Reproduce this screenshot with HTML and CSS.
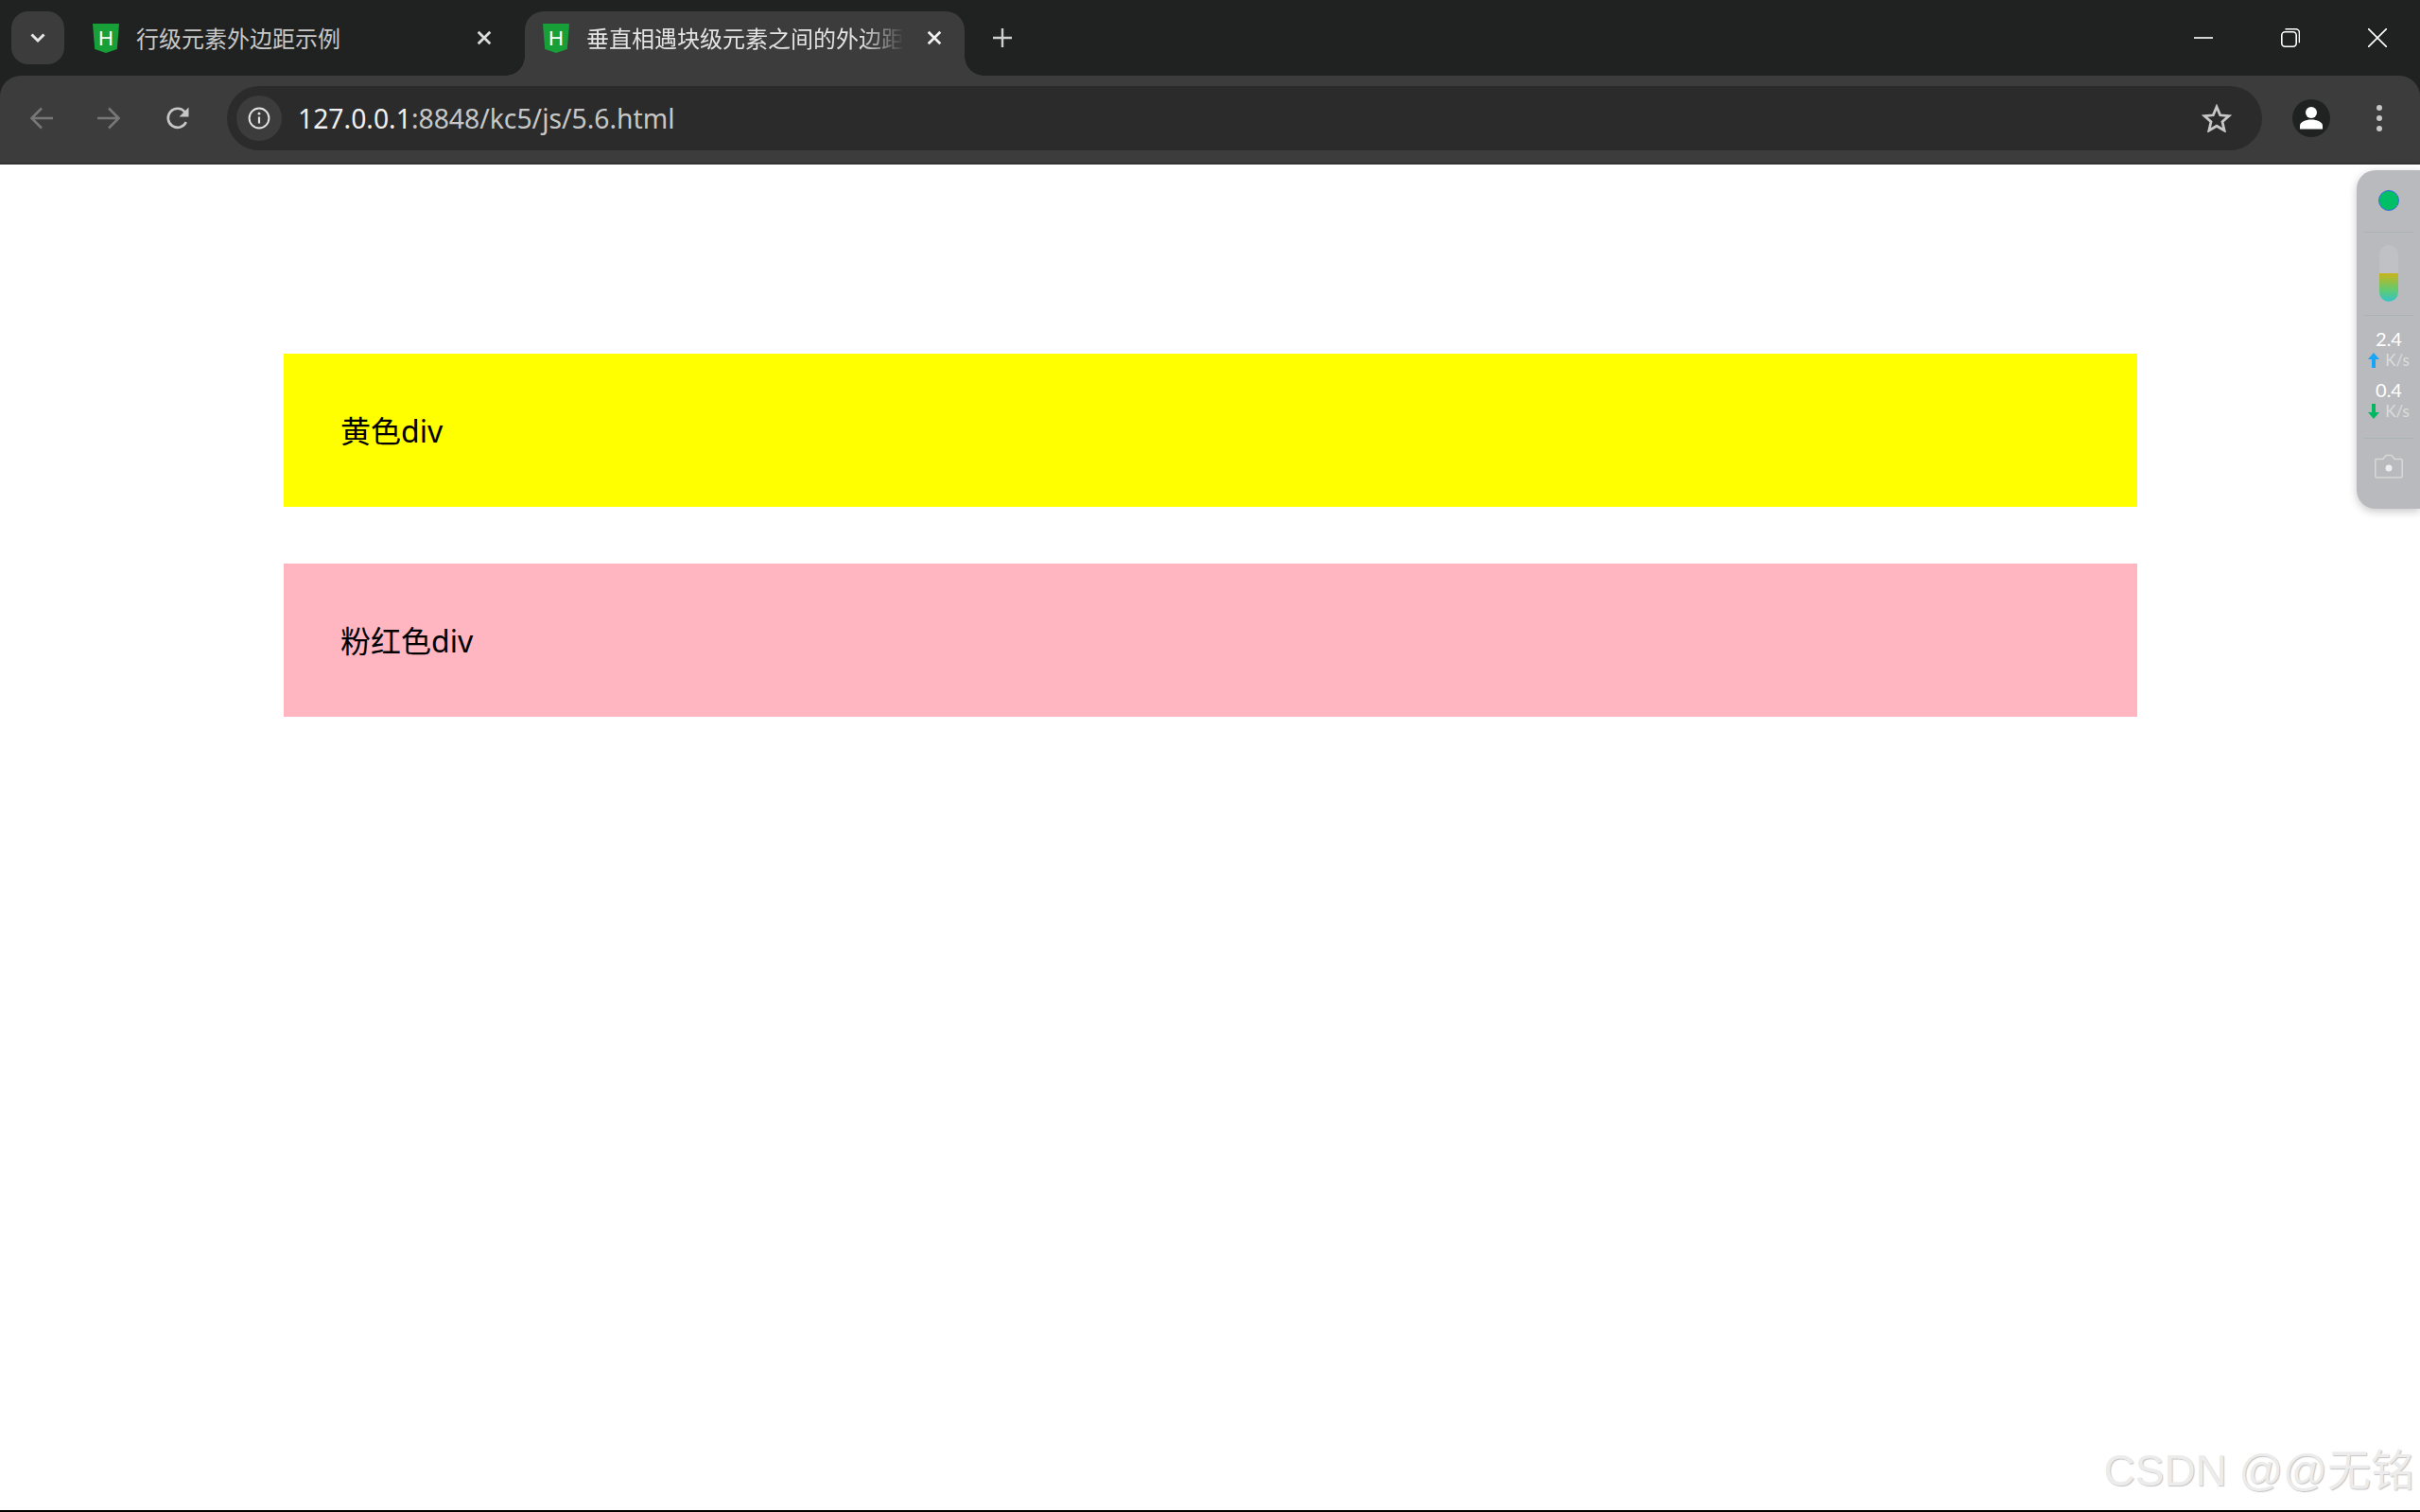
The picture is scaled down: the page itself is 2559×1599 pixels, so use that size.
FILE: index.html
```html
<!DOCTYPE html>
<html lang="zh-CN">
<head>
<meta charset="utf-8">
<title>垂直相遇块级元素之间的外边距</title>
<link rel="stylesheet" href="styles.css">
</head>
<body>
<header class="browser">
  <div class="strip">
    <button class="tab-search" aria-label="tabs">
      <svg width="18" height="12" viewBox="0 0 18 12"><path d="M2.500 2.500 9 9l6.500-6.500" fill="none" stroke="#e6e6e6" stroke-width="3"/></svg>
    </button>
    <div class="tab tab-idle">
      <svg class="favicon" width="28" height="31" viewBox="0 0 28 31"><path d="M0 0h28l-2.200 27L14 31 2.200 27z" fill="#18a038"/><text x="14" y="23" text-anchor="middle" class="fav-h">H</text></svg>
      <span class="tab-title">行级元素外边距示例</span>
      <svg class="tab-close" width="16" height="16" viewBox="0 0 14 14"><path d="M1.500 1.500l11 11M12.500 1.500l-11 11" stroke="#dcdcdc" stroke-width="2.400"/></svg>
    </div>
    <div class="tab tab-active">
      <svg class="favicon" width="28" height="31" viewBox="0 0 28 31"><path d="M0 0h28l-2.200 27L14 31 2.200 27z" fill="#18a038"/><text x="14" y="23" text-anchor="middle" class="fav-h">H</text></svg>
      <span class="tab-title">垂直相遇块级元素之间的外边距</span>
      <svg class="tab-close" width="16" height="16" viewBox="0 0 14 14"><path d="M1.500 1.500l11 11M12.500 1.500l-11 11" stroke="#f0f0f0" stroke-width="2.400"/></svg>
    </div>
    <svg class="new-tab" width="20" height="20" viewBox="0 0 20 20"><path d="M10 0v20M0 10h20" stroke="#d0d0d0" stroke-width="2.400"/></svg>
    <div class="window-controls">
      <svg width="20" height="20" viewBox="0 0 20 20"><path d="M0 10h20" stroke="#fff" stroke-width="1.600"/></svg>
      <svg width="20" height="20" viewBox="0 0 20 20"><rect x="0.800" y="3.800" width="15.400" height="15.400" rx="3.500" fill="none" stroke="#fff" stroke-width="1.600"/><path d="M4.500 0.800h11a4 4 0 0 1 4 4v10.500" fill="none" stroke="#fff" stroke-width="1.600"/></svg>
      <svg width="20" height="20" viewBox="0 0 20 20"><path d="M0 0l20 20M20 0L0 20" stroke="#fff" stroke-width="1.600"/></svg>
    </div>
  </div>
  <div class="toolbar">
    <svg class="nav-icon nav-back" width="26" height="26" viewBox="0 0 26 26"><path d="M25 13H3M13 2.500 2.500 13 13 23.500" fill="none" stroke="#777" stroke-width="2.600"/></svg>
    <svg class="nav-icon nav-forward" width="26" height="26" viewBox="0 0 26 26"><path d="M1 13h22M13 2.500 23.500 13 13 23.500" fill="none" stroke="#777" stroke-width="2.600"/></svg>
    <svg class="nav-icon nav-reload" width="26" height="26" viewBox="0 0 26 26"><path d="M21.800 17A10 10 0 1 1 20.500 6.500L23 9.500" fill="none" stroke="#c7c7c7" stroke-width="2.600"/><path d="M24.500 1.500v10h-10z" fill="#c7c7c7"/></svg>
    <div class="omnibox">
      <span class="info-chip">
        <svg width="24" height="24" viewBox="0 0 24 24"><circle cx="12" cy="12" r="10.400" fill="none" stroke="#e3e3e3" stroke-width="2"/><path d="M12 10.500v7" stroke="#e3e3e3" stroke-width="2.200"/><circle cx="12" cy="7.200" r="1.400" fill="#e3e3e3"/></svg>
      </span>
      <span class="url"><span class="url-host">127.0.0.1</span>:8848/kc5/js/5.6.html</span>
      <svg class="star" width="32" height="30" viewBox="0 0 32 30"><path d="M16 3l3.700 8.800 9.300.8-7 6.200 2.100 9.200L16 23.200 7.900 28l2.100-9.200-7-6.200 9.300-.8z" fill="none" stroke="#c7c7c7" stroke-width="2.800"/></svg>
    </div>
    <span class="avatar">
      <svg width="26" height="26" viewBox="0 0 26 26"><circle cx="13" cy="7" r="6" fill="#fff"/><path d="M1 24.500v-3.500c0-4 6-6.500 12-6.500s12 2.500 12 6.500v3.500z" fill="#fff"/></svg>
    </span>
    <svg class="menu-dots" width="6" height="28" viewBox="0 0 6 28"><circle cx="3" cy="3" r="3" fill="#c7c7c7"/><circle cx="3" cy="14" r="3" fill="#c7c7c7"/><circle cx="3" cy="25" r="3" fill="#c7c7c7"/></svg>
  </div>
</header>

<main class="page">
  <div class="box box-yellow">黄色div</div>
  <div class="box box-pink">粉红色div</div>
</main>
<div class="edge"></div>

<aside class="monitor">
  <span class="status-dot"></span>
  <hr class="rule rule-first">
  <span class="pill"><span class="pill-fill"></span></span>
  <hr class="rule rule-second">
  <div class="rate">
    <span class="rate-value">2.4</span>
    <span class="rate-unit"><svg width="12" height="16" viewBox="0 0 12 16"><path d="M6 0l6 7H8v9H4V7H0z" fill="#18a5f5"/></svg>K/s</span>
  </div>
  <div class="rate">
    <span class="rate-value">0.4</span>
    <span class="rate-unit"><svg width="12" height="16" viewBox="0 0 12 16"><path d="M6 16l6-7H8V0H4v9H0z" fill="#00b860"/></svg>K/s</span>
  </div>
  <hr class="rule rule-third">
  <svg class="camera" width="30" height="26" viewBox="0 0 30 26"><path d="M2 5.500h7L12 1.500h6l3 4h7a1.200 1.200 0 0 1 1.200 1.200v17a1.200 1.200 0 0 1-1.200 1.200H2A1.200 1.200 0 0 1 .8 23.700v-17A1.200 1.200 0 0 1 2 5.500z" fill="none" stroke="#d8d8d8" stroke-width="1.500"/><circle cx="15" cy="15" r="3.500" fill="#eee"/></svg>
</aside>

<div class="watermark">CSDN @@无铭</div>
</body>
</html>
```

FILE: styles.css
```css
* { box-sizing: border-box; }

html, body {
  margin: 0;
  height: 100%;
}

body {
  display: flex;
  flex-direction: column;
  overflow: hidden;
  background: #fff;
  color: #000;
  font-family: "Noto Sans", "Noto Sans CJK SC", sans-serif;
}

/* browser chrome */
.browser {
  flex: none;
  background: #202222;
}

.strip {
  display: flex;
  align-items: flex-end;
  height: 80px;
  padding-left: 12px;
}

.tab-search {
  display: flex;
  align-items: center;
  justify-content: center;
  flex: none;
  width: 56px;
  height: 56px;
  margin-bottom: 12px;
  padding: 0;
  border: 0;
  border-radius: 18px;
  background: #3c3c3c;
}

.tab {
  display: flex;
  align-items: center;
  position: relative;
  flex: none;
  height: 68px;
  padding-bottom: 12px;
  color: #c7c7c7;
  font-family: "Noto Sans CJK SC", sans-serif;
  font-size: 24px;
  line-height: 36px;
}

.tab-idle {
  width: 487px;
  padding-left: 30px;
  padding-right: 35px;
}

.tab-active {
  width: 465px;
  padding-left: 19px;
  padding-right: 24px;
  border-radius: 20px 20px 0 0;
  background: #3c3c3c;
  color: #e3e3e3;
}

.tab-active::before,
.tab-active::after {
  content: "";
  position: absolute;
  bottom: 0;
  width: 20px;
  height: 20px;
}

.tab-active::before {
  left: -20px;
  background: radial-gradient(circle at 0 0, transparent 19.500px, #3c3c3c 20px);
}

.tab-active::after {
  right: -20px;
  background: radial-gradient(circle at 100% 0, transparent 19.500px, #3c3c3c 20px);
}

.favicon {
  flex: none;
  margin-right: 18px;
}

.fav-h {
  fill: #fff;
  font-family: "Liberation Sans", sans-serif;
  font-size: 22px;
}

.tab-title {
  flex: 1;
  min-width: 0;
  white-space: nowrap;
}

.tab-active .tab-title {
  -webkit-mask-image: linear-gradient(to right, #000 290px, transparent 336px);
  mask-image: linear-gradient(to right, #000 290px, transparent 336px);
}

.tab-close {
  flex: none;
  margin-left: 8px;
}

.new-tab {
  flex: none;
  margin: 0 0 30px 30px;
}

.window-controls {
  display: flex;
  gap: 72px;
  margin: 0 35px 30px auto;
}

.toolbar {
  display: flex;
  align-items: center;
  height: 94px;
  padding: 0 0 2px 31px;
  border-radius: 22px 22px 0 0;
  border-bottom: 2px solid #333;
  background: #3c3c3c;
}

.nav-icon { flex: none; }
.nav-forward { margin-left: 45px; }
.nav-reload { margin-left: 47px; }

.omnibox {
  display: flex;
  align-items: center;
  flex: none;
  width: 2152px;
  height: 68px;
  margin-left: 39px;
  padding: 0 32px 0 10px;
  border-radius: 34px;
  background: #2b2b2b;
}

.info-chip {
  display: flex;
  align-items: center;
  justify-content: center;
  flex: none;
  width: 48px;
  height: 48px;
  border-radius: 50%;
  background: #3c3c3c;
}

.url {
  flex: 1;
  margin-left: 17px;
  color: #c7c7c7;
  font-family: "Noto Sans", sans-serif;
  font-size: 28.300px;
  line-height: 40px;
  white-space: nowrap;
}

.url-host { color: #f0f0f0; }

.star { flex: none; }

.avatar {
  display: flex;
  align-items: center;
  justify-content: center;
  flex: none;
  width: 40px;
  height: 40px;
  margin-left: 32px;
  border-radius: 50%;
  background: #202222;
}

.menu-dots {
  flex: none;
  margin-left: 49px;
}

/* page content */
.page {
  flex: 1;
  padding: 200px 299px 0 300px;
}

.box {
  height: 162px;
  margin-bottom: 60px;
  padding: 61px 60px 59px;
  font-size: 32px;
  line-height: 42px;
}

.box-yellow { background: #ff0; }
.box-pink { background: #ffb6c1; }

.edge {
  flex: none;
  height: 2px;
  background: #000;
}

/* floating network monitor */
.monitor {
  position: absolute;
  top: 180px;
  right: 0;
  display: flex;
  flex-direction: column;
  align-items: center;
  width: 67px;
  height: 358px;
  padding: 21px 7px 0 8px;
  border-radius: 20px 0 0 20px;
  background: #b9babd;
  box-shadow: 0 3px 10px rgba(0, 0, 0, .22);
}

.status-dot {
  flex: none;
  width: 22px;
  height: 22px;
  border: 1px solid #3d6fd8;
  border-radius: 50%;
  background: #00bf66;
}

.rule {
  flex: none;
  width: 52px;
  height: 1px;
  margin: 0;
  border: 0;
  background: #a9b2b4;
}

.rule-first { margin: 22px 0 13px; }
.rule-second { margin: 14px 0 0; }
.rule-third { margin: 19px 0 16px; }

.pill {
  display: flex;
  align-items: flex-end;
  flex: none;
  width: 20px;
  height: 60px;
  overflow: hidden;
  border-radius: 10px;
  background: #c0c1c5;
}

.pill-fill {
  width: 100%;
  height: 30px;
  background: linear-gradient(#c9b418, #5fcb74 60%, #35c1c8);
}

.rate {
  display: flex;
  flex-direction: column;
  align-items: center;
  width: 100%;
  margin-top: 15px;
  font-family: "Lato", sans-serif;
}

.rate + .rate { margin-top: 13px; }

.rate-value {
  color: #fff;
  font-size: 20px;
  line-height: 19px;
}

.rate-unit {
  display: flex;
  align-items: center;
  gap: 6px;
  margin-top: 3px;
  color: #dcdcdc;
  font-size: 17px;
  line-height: 19px;
}

.camera { flex: none; }

/* watermark over the page */
.watermark {
  position: absolute;
  right: 6px;
  bottom: 14px;
  color: #ececec;
  font-family: "Liberation Sans", "Noto Sans CJK SC", sans-serif;
  font-size: 46px;
  line-height: 60px;
  white-space: nowrap;
  text-shadow: 1px 1px 1px #c4c4c4;
}
```
